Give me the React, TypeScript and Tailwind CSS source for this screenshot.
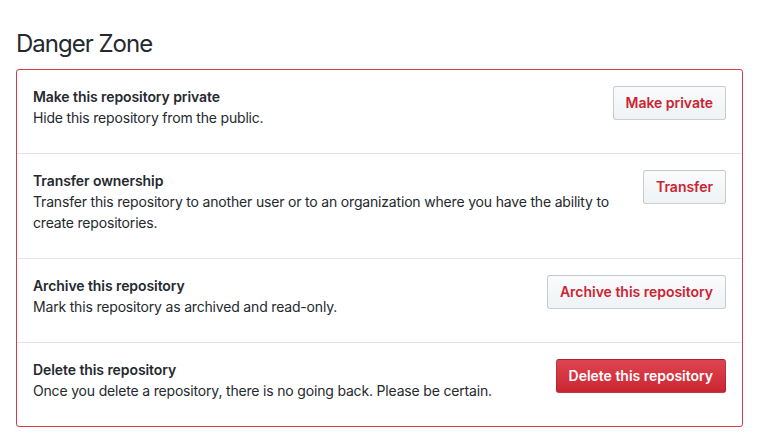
import React from 'react';

// Danger Zone settings panel (repository settings page)

type Row = {
  title: string;
  desc: string;
  action: string;
  primary?: boolean;
};

const rows: Row[] = [
  { title: 'Make this repository private', desc: 'Hide this repository from the public.', action: 'Make private' },
  {
    title: 'Transfer ownership',
    desc: 'Transfer this repository to another user or to an organization where you have the ability to create repositories.',
    action: 'Transfer',
  },
  { title: 'Archive this repository', desc: 'Mark this repository as archived and read-only.', action: 'Archive this repository' },
  {
    title: 'Delete this repository',
    desc: 'Once you delete a repository, there is no going back. Please be certain.',
    action: 'Delete this repository',
    primary: true,
  },
];

const DangerButton: React.FC<{ label: string; primary?: boolean }> = ({ label, primary }) =>
  primary ? (
    <button className="shrink-0 whitespace-nowrap rounded-[3px] border border-[rgba(27,31,35,0.2)] bg-gradient-to-b from-[#de4450] to-[#cb2431] px-3 py-[6px] text-sm leading-5 font-semibold tracking-[-0.02px] text-white">
      {label}
    </button>
  ) : (
    <button className="shrink-0 whitespace-nowrap rounded-[3px] border border-[rgba(27,31,35,0.2)] bg-gradient-to-b from-[#fafbfc] to-[#eff3f6] px-3 py-[6px] text-sm leading-5 font-semibold tracking-[-0.02px] text-[#cb2431]">
      {label}
    </button>
  );

export default function App() {
  return (
    <div className="min-h-[442px] bg-white px-4 pt-[29px] font-['Inter',sans-serif] text-[#24292e]">
      <h2 className="mb-[10px] text-2xl leading-[30px] font-normal tracking-[-1px]">Danger Zone</h2>
      <div className="w-[727px] rounded-[3px] border border-[#d73a49]">
        {rows.map((r, i) => (
          <div
            key={r.title}
            className={`flex items-start justify-between gap-4 px-4 pt-4 pb-[25px] ${i > 0 ? 'border-t border-[#e1e4e8]' : ''}`}
          >
            <div className="min-w-0 text-sm leading-[21px] tracking-[-0.18px]">
              <div className="font-semibold tracking-[-0.08px]">{r.title}</div>
              <div>{r.desc}</div>
            </div>
            <DangerButton label={r.action} primary={r.primary} />
          </div>
        ))}
      </div>
    </div>
  );
}
